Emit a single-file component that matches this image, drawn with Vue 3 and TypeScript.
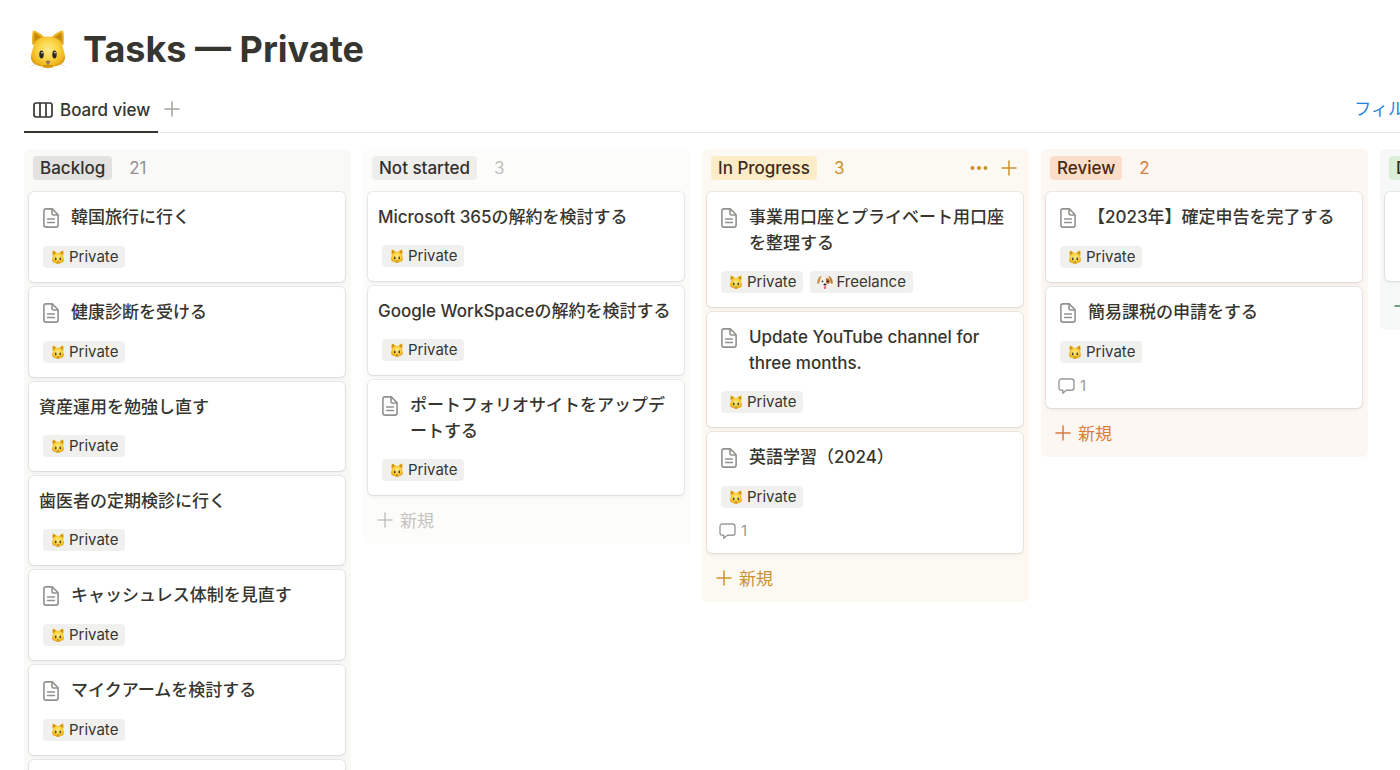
<script setup lang="ts">
interface Tag {
  name: string
  icon: 'cat' | 'dog'
}
interface Card {
  title: string
  doc?: boolean
  tags: Tag[]
  comments?: number
}
interface Column {
  name: string
  tone: string
  count: number
  actions?: boolean
  cards: Card[]
}

const priv: Tag = { name: 'Private', icon: 'cat' }
const free: Tag = { name: 'Freelance', icon: 'dog' }

const columns: Column[] = [
  {
    name: 'Backlog',
    tone: 'gray',
    count: 21,
    cards: [
      { title: '韓国旅行に行く', doc: true, tags: [priv] },
      { title: '健康診断を受ける', doc: true, tags: [priv] },
      { title: '資産運用を勉強し直す', tags: [priv] },
      { title: '歯医者の定期検診に行く', tags: [priv] },
      { title: 'キャッシュレス体制を見直す', doc: true, tags: [priv] },
      { title: 'マイクアームを検討する', doc: true, tags: [priv] },
      { title: '', tags: [] },
    ],
  },
  {
    name: 'Not started',
    tone: 'light',
    count: 3,
    cards: [
      { title: 'Microsoft 365の解約を検討する', tags: [priv] },
      { title: 'Google WorkSpaceの解約を検討する', tags: [priv] },
      { title: 'ポートフォリオサイトをアップデートする', doc: true, tags: [priv] },
    ],
  },
  {
    name: 'In Progress',
    tone: 'yellow',
    count: 3,
    actions: true,
    cards: [
      { title: '事業用口座とプライベート用口座を整理する', doc: true, tags: [priv, free] },
      { title: 'Update YouTube channel for three months.', doc: true, tags: [priv] },
      { title: '英語学習（2024）', doc: true, tags: [priv], comments: 1 },
    ],
  },
  {
    name: 'Review',
    tone: 'orange',
    count: 2,
    cards: [
      { title: '【2023年】確定申告を完了する', doc: true, tags: [priv] },
      { title: '簡易課税の申請をする', doc: true, tags: [priv], comments: 1 },
    ],
  },
  {
    name: 'Done',
    tone: 'green',
    count: 1,
    cards: [{ title: '', tags: [] }],
  },
]
</script>

<template>
  <div class="page">
    <svg class="defs" aria-hidden="true">
      <defs>
        <radialGradient id="fur" cx="0.5" cy="0.42" r="0.62">
          <stop offset="0" stop-color="#fde98c" />
          <stop offset="0.45" stop-color="#fbd748" />
          <stop offset="0.8" stop-color="#f0b51c" />
          <stop offset="1" stop-color="#cf8d10" />
        </radialGradient>
        <linearGradient id="ear" x1="0" y1="0" x2="0" y2="1">
          <stop offset="0" stop-color="#f4c02c" />
          <stop offset="1" stop-color="#d99a12" />
        </linearGradient>
        <symbol id="cat" viewBox="0 0 40 40">
          <path d="M4 33 L9 31 M3 38 L10 33 M36 33 L31 31 M37 38 L30 33" stroke="#d9d3c6" stroke-width="0.8" fill="none" />
          <path d="M4.500 16 C4 10 4 4 5 1.500 C9 1.500 14 5.500 17 9 Z M35.500 16 C36 10 36 4 35 1.500 C31 1.500 26 5.500 23 9 Z" fill="url(#ear)" />
          <path d="M6.500 12 C6 8 6 5 6.500 3.500 C9 4.500 12 7 14 9 Z M33.500 12 C34 8 34 5 33.500 3.500 C31 4.500 28 7 26 9 Z" fill="#c88a0c" />
          <path d="M20 7.500 C29 7.500 34 12 35 19 C36 23 37.500 26 37 29.500 C36.400 34 31 37 26 37.500 C24 39.800 16 39.800 14 37.500 C9 37 3.600 34 3 29.500 C2.500 26 4 23 5 19 C6 12 11 7.500 20 7.500 Z" fill="url(#fur)" />
          <ellipse cx="13.500" cy="25.500" rx="2.200" ry="3.900" fill="#2b2926" />
          <ellipse cx="26.500" cy="25.500" rx="2.200" ry="3.900" fill="#2b2926" />
          <circle cx="14" cy="23.800" r="0.8" fill="#fff" />
          <circle cx="27" cy="23.800" r="0.8" fill="#fff" />
          <path d="M17.500 32.200 Q20 30.600 22.500 32.200 Q22 35 20 35.300 Q18 35 17.500 32.200 Z" fill="#94735e" />
          <path d="M20 35 V36.400 M16 36.400 Q18.500 38 20 36.400 Q21.500 38 24 36.400" stroke="#a8730c" stroke-width="0.9" fill="none" />
        </symbol>
        <symbol id="dog" viewBox="0 0 16 16">
          <path d="M8 1.200 C12 1.200 13.800 4.200 14 8 C14 11.500 11.500 14 8 14 C4.500 14 2 11.500 2 8 C2.200 4.200 4 1.200 8 1.200 Z" fill="#f3eee8" />
          <path d="M9 4.500 C11.500 3.500 13 5.500 12.800 8.200 C12.300 10.400 9.800 10 9 8.200 Z" fill="#b5691c" />
          <path d="M4.600 2 C2.200 2 0.200 5.500 0.200 9 C1 10.600 2.200 9.800 2.600 8 C2.900 6 3.600 4 4.600 2 Z" fill="#cf8f4b" />
          <path d="M11.400 2 C13.800 2 15.800 5.500 15.800 9 C15 10.600 13.800 9.800 13.400 8 C13.100 6 12.400 4 11.400 2 Z" fill="#c07a33" />
          <circle cx="5.500" cy="7.300" r="0.9" fill="#3a2a22" />
          <circle cx="10.700" cy="7.300" r="0.9" fill="#2d1a10" />
          <ellipse cx="8" cy="10.400" rx="1.500" ry="1" fill="#33231f" />
          <path d="M6.900 12.200 H9.100 V14.200 Q8 16 6.900 14.200 Z" fill="#ee5f80" />
        </symbol>
        <symbol id="plus" viewBox="0 0 16 16">
          <path d="M8 1 V15 M1 8 H15" stroke="currentColor" stroke-width="1.500" stroke-linecap="round" fill="none" />
        </symbol>
      </defs>
    </svg>

    <header class="heading">
      <svg class="logo" aria-hidden="true"><use href="#cat" /></svg>
      <h1>Tasks — Private</h1>
    </header>

    <nav class="bar">
      <button class="tab" type="button">
        <svg width="20" height="16" viewBox="0 0 20 16" fill="none" stroke="currentColor" stroke-width="1.700" aria-hidden="true">
          <rect x="1" y="1" width="18" height="14" rx="2.200" />
          <path d="M7 1 V15 M13 1 V15" />
        </svg>
        Board view
      </button>
      <button class="add-view" type="button" aria-label="Add view">
        <svg width="16" height="16"><use href="#plus" /></svg>
      </button>
      <a class="filter" href="#">フィルター</a>
    </nav>

    <main class="board">
      <section v-for="col in columns" :key="col.name" class="column" :class="col.tone">
        <header class="col-head">
          <h2 class="badge">{{ col.name }}</h2>
          <span class="count">{{ col.count }}</span>
          <div v-if="col.actions" class="actions">
            <button type="button" aria-label="Column options">
              <svg width="20" height="16" viewBox="0 0 20 16" fill="currentColor" aria-hidden="true">
                <circle cx="3.500" cy="8" r="2" /><circle cx="10" cy="8" r="2" /><circle cx="16.500" cy="8" r="2" />
              </svg>
            </button>
            <button type="button" aria-label="Add card">
              <svg width="16" height="16"><use href="#plus" /></svg>
            </button>
          </div>
        </header>

        <div class="cards">
          <article v-for="(card, i) in col.cards" :key="i" class="card">
            <h3 class="title" :class="{ doc: card.doc }">
              <svg v-if="card.doc" class="doc-icon" viewBox="0 0 16 20" fill="none" stroke="currentColor" stroke-width="1.600" stroke-linejoin="round" aria-hidden="true">
                <path d="M3 0.900 H9.300 L15.100 6.700 V17 Q15.100 19.100 13 19.100 H3 Q0.900 19.100 0.900 17 V3 Q0.900 0.900 3 0.900 Z" />
                <path d="M9 1 V5.500 Q9 7 10.500 7 H15" />
                <path d="M4.500 11 H11.500 M4.500 14.500 H11.500" stroke-linecap="round" stroke-width="1.300" />
              </svg>
              <span>{{ card.title }}</span>
            </h3>
            <div class="tags">
              <span v-for="tag in card.tags" :key="tag.name" class="tag">
                <svg :class="tag.icon" aria-hidden="true"><use :href="'#' + tag.icon" /></svg>{{ tag.name }}
              </span>
            </div>
            <div v-if="card.comments" class="comments">
              <svg width="17" height="16" viewBox="0 0 17 16" fill="none" stroke="currentColor" stroke-width="1.400" stroke-linejoin="round" aria-hidden="true">
                <path d="M3.500 1 H13.500 Q16 1 16 3.500 V9.800 Q16 12.300 13.500 12.300 H8.300 L4.800 15.200 V12.300 H3.500 Q1 12.300 1 9.800 V3.500 Q1 1 3.500 1 Z" />
              </svg>
              {{ card.comments }}
            </div>
          </article>
        </div>

        <button class="new" type="button">
          <svg width="16" height="16" aria-hidden="true"><use href="#plus" /></svg>
          新規
        </button>
      </section>
    </main>
  </div>
</template>

<style>
body {
  margin: 0;
  background: #fff;
}
</style>

<style scoped>
.page {
  height: 100vh;
  overflow: hidden;
  box-sizing: border-box;
  padding: 24px 0 0 24px;
  color: #37352f;
  font-family: Inter, "Noto Sans CJK JP", sans-serif;
  font-size: 16px;
}
.defs {
  position: absolute;
  width: 0;
  height: 0;
}
button {
  display: flex;
  align-items: center;
  padding: 0;
  border: 0;
  background: none;
  color: inherit;
  font: inherit;
  cursor: pointer;
}
h1, h2, h3 {
  margin: 0;
}
.heading {
  display: flex;
  align-items: center;
  gap: 15px;
  height: 50px;
  padding-left: 4px;
}
.logo {
  width: 40px;
  height: 40px;
}
h1 {
  font-size: 36px;
  line-height: 48px;
  font-weight: 700;
}
.bar {
  display: flex;
  height: 58px;
  border-bottom: 1px solid #e9e9e7;
}
.tab {
  gap: 7px;
  height: 59px;
  padding: 14px 8px 0 9px;
  border-bottom: 2px solid #37352f;
  box-sizing: border-box;
  font-size: 17px;
  font-weight: 500;
  white-space: nowrap;
}
.add-view {
  margin-left: 6px;
  padding-top: 12px;
  color: #a5a4a0;
}
.filter {
  margin: 22px -39px 0 auto;
  color: #2383e2;
  font-size: 17px;
  line-height: 26px;
  text-decoration: none;
  white-space: nowrap;
}
.board {
  display: flex;
  align-items: flex-start;
  gap: 12px;
  padding-top: 16px;
}
.column {
  flex: 0 0 327px;
  box-sizing: border-box;
  padding: 0 6px 0 5px;
  border-radius: 6px;
}
.col-head {
  display: flex;
  align-items: center;
  height: 38px;
  padding: 0 6px 0 4px;
  margin-bottom: 5px;
}
.badge {
  padding: 0 7px;
  border-radius: 4px;
  color: #32302c;
  font-size: 17px;
  line-height: 24px;
  font-weight: 500;
}
.count {
  margin-left: 17px;
  font-size: 17px;
  line-height: 24px;
}
.actions {
  display: flex;
  gap: 12px;
  margin-left: auto;
}
.cards {
  display: flex;
  flex-direction: column;
  gap: 5px;
}
.card {
  box-sizing: border-box;
  min-height: 89px;
  padding: 12px 10px 14px;
  border-radius: 5px;
  background: #fff;
  box-shadow: 0 0 0 1px rgba(15, 15, 15, 0.07), 0 2px 4px rgba(15, 15, 15, 0.06);
}
.title {
  display: flex;
  align-items: flex-start;
  font-size: 17px;
  line-height: 26px;
  font-weight: 500;
}
.title.doc {
  min-height: 27px;
  padding-right: 8px;
}
.doc-icon {
  flex: none;
  width: 16px;
  height: 20px;
  margin: 4px 12px 0 4px;
  color: #91918e;
}
.tags {
  display: flex;
  gap: 7px;
  margin-top: 15px;
  padding-left: 4px;
}
.tag {
  display: flex;
  align-items: center;
  padding: 0 7px 0 8px;
  border-radius: 4px;
  background: #f0f0ef;
  color: #37352f;
  font-size: 15px;
  line-height: 22px;
}
.tag svg {
  width: 14px;
  height: 14px;
  margin-right: 4px;
}
.tag svg.dog {
  width: 16px;
  height: 16px;
  margin-left: -1px;
  margin-right: 3px;
}
.comments {
  display: flex;
  align-items: center;
  gap: 5px;
  margin-top: 14px;
  padding-left: 2px;
  color: #9b9a97;
  font-size: 15px;
  line-height: 17px;
}
.new {
  gap: 7px;
  width: 100%;
  height: 49px;
  padding-left: 9px;
  font-size: 17px;
}
.gray { background: #f9f9f8; }
.gray .badge { background: #e3e2e0; }
.gray .count { color: #91918e; }
.light { background: #fcfcfb; }
.light .badge { background: #efeeed; }
.light .count, .light .new { color: #c4c3c0; }
.yellow { background: #fcf9f2; }
.yellow .badge { background: #fdecc8; color: #402c1b; }
.yellow .count, .yellow .new, .yellow .actions { color: #cb912f; }
.orange { background: #fdf7f4; }
.orange .badge { background: #fadec9; color: #49290e; }
.orange .count, .orange .new { color: #d87c3a; }
.green { background: #f6f9f7; }
.green .badge { background: #dbeddb; color: #1c3829; }
.green .count, .green .new { color: #448361; }
</style>
